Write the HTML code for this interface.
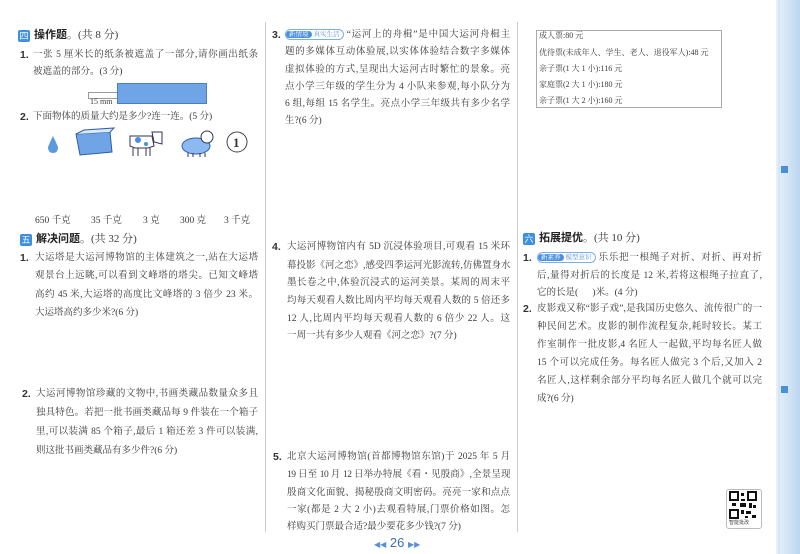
<!DOCTYPE html>
<html><head><meta charset="utf-8">
<style>
body{margin:0;width:800px;height:554px;overflow:hidden;background:#fff;position:relative;font-family:"Liberation Serif","Noto Serif CJK SC",serif;color:#3a3a3a;}
.l{position:absolute;font-size:9.5px;line-height:14px;white-space:nowrap;}
.j{text-align:justify;text-align-last:justify;white-space:normal;height:14px;overflow:visible;}
.n{position:absolute;font-size:10.5px;font-weight:bold;line-height:14px;font-family:"Liberation Sans",sans-serif;color:#333;}
.h{position:absolute;font-size:11px;line-height:14px;white-space:nowrap;}
.h b{font-family:"Liberation Sans","Noto Sans CJK SC",sans-serif;color:#222;}
.ic{display:inline-block;width:12px;height:12px;background:#3d8fe0;color:#fff;font-size:9px;line-height:12px;text-align:center;border-radius:2px;margin-right:4px;vertical-align:-1px;font-family:"Noto Sans CJK SC",sans-serif;}
.vl{position:absolute;top:22px;bottom:22px;width:1px;background:#ccc;}
.tag{display:inline-block;border:1px solid #7aaee8;border-radius:7px;font-size:6.5px;line-height:9px;padding:0 3px 0 0;color:#5a8fd8;vertical-align:1px;}
.tag i{font-style:normal;background:#4a8fe0;color:#fff;border-radius:7px;padding:0 3px;margin-right:2px;}
.t{position:absolute;font-size:8px;line-height:12px;white-space:nowrap;left:539px;}
.s{letter-spacing:-0.5px;}
</style></head><body>
<div class="vl" style="left:265px"></div>
<div class="vl" style="left:517px"></div>
<div style="position:absolute;left:776px;top:0;width:24px;height:554px;background:linear-gradient(90deg,#e6f0fa,#cfe2f5 60%,#bcd6ef)"></div>
<div style="position:absolute;left:778px;top:0;width:2px;height:554px;background:#d6e6f5"></div>
<div style="position:absolute;left:781px;top:166px;width:7px;height:7px;background:#4a8fd8"></div>
<div style="position:absolute;left:781px;top:386px;width:7px;height:7px;background:#4a8fd8"></div>

<!-- Left column -->
<div class="h" style="left:18px;top:28px"><span class="ic">四</span><b>操作题</b>。(共 8 分)</div>
<div class="n" style="left:20px;top:48px">1.</div>
<div class="l j" style="left:33px;top:48px;width:225px">一张 5 厘米长的纸条被遮盖了一部分,请你画出纸条</div>
<div class="l" style="left:33px;top:65px">被遮盖的部分。(3 分)</div>
<div style="position:absolute;left:88px;top:92px;width:29px;height:5px;border:1px solid #999;background:#fff"></div>
<div style="position:absolute;left:90px;top:97px;font-size:8px;font-family:'Liberation Serif',serif">15 mm</div>
<div style="position:absolute;left:117px;top:83px;width:88px;height:19px;background:#6fa4e6;border:1px solid #4a7fc6"></div>
<div class="n" style="left:20px;top:110px">2.</div>
<div class="l" style="left:33px;top:110px">下面物体的质量大约是多少?连一连。(5 分)</div>
<svg style="position:absolute;left:40px;top:126px" width="215" height="36">
<path d="M13 10 Q10 16 8 21 Q8 27 13 27 Q18 27 18 21 Q16 16 13 10Z" fill="#5b9ae0"/>
<path d="M36 8 L70 6 L72 26 L40 29Z" fill="#6fa4e6" stroke="#2a5fa8"/>
<path d="M36 8 L44 4 L74 2 L70 6" fill="#dde9f8" stroke="#2a5fa8"/>
<path d="M90 10 L112 10 L114 20 L108 22 L95 22 L90 20Z" fill="#fff" stroke="#335"/>
<circle cx="98" cy="14" r="3" fill="#4a8fe0"/><circle cx="106" cy="18" r="2" fill="#4a8fe0"/>
<path d="M112 6 L122 6 L122 18 L114 16Z" fill="#fff" stroke="#335"/>
<path d="M93 22 L93 30 M98 22 L98 30 M106 22 L106 30 M110 22 L110 30" stroke="#335"/>
<ellipse cx="156" cy="20" rx="14" ry="8" fill="#8cbaf0" stroke="#2a5fa8"/>
<circle cx="167" cy="11" r="6" fill="#fff" stroke="#335"/>
<path d="M148 27 L148 31 M153 27 L153 31 M160 27 L160 31 M165 27 L165 31" stroke="#335"/>
<circle cx="197" cy="16" r="10" fill="#fff" stroke="#444"/>
<text x="193" y="21" font-size="13" font-weight="bold" fill="#333" font-family="Liberation Serif">1</text>
</svg>
<div class="l" style="left:35px;top:214px">650 千克</div>
<div class="l" style="left:91px;top:214px">35 千克</div>
<div class="l" style="left:143px;top:214px">3 克</div>
<div class="l" style="left:180px;top:214px">300 克</div>
<div class="l" style="left:224px;top:214px">3 千克</div>
<div class="h" style="left:20px;top:232px"><span class="ic">五</span><b>解决问题</b>。(共 32 分)</div>
<div class="n" style="left:20px;top:251px">1.</div>
<div class="l j" style="left:35px;top:251px;width:223px">大运塔是大运河博物馆的主体建筑之一,站在大运塔</div>
<div class="l j" style="left:35px;top:269px;width:223px">观景台上远眺,可以看到文峰塔的塔尖。已知文峰塔</div>
<div class="l j" style="left:35px;top:288px;width:223px">高约 45 米,大运塔的高度比文峰塔的 3 倍少 23 米。</div>
<div class="l" style="left:35px;top:306px">大运塔高约多少米?(6 分)</div>
<div class="n" style="left:22px;top:387px">2.</div>
<div class="l j" style="left:36px;top:387px;width:222px">大运河博物馆珍藏的文物中,书画类藏品数量众多且</div>
<div class="l j" style="left:36px;top:406px;width:222px">独具特色。若把一批书画类藏品每 9 件装在一个箱子</div>
<div class="l j" style="left:36px;top:425px;width:222px">里,可以装满 85 个箱子,最后 1 箱还差 3 件可以装满,</div>
<div class="l" style="left:36px;top:444px">则这批书画类藏品有多少件?(6 分)</div>

<!-- Middle column -->
<div class="n" style="left:272px;top:28px">3.</div>
<div class="l j" style="left:285px;top:28px;width:225px"><span class="tag"><i>新情境</i>真实生活</span> “运河上的舟楫”是中国大运河舟楫主</div>
<div class="l j" style="left:285px;top:45px;width:225px">题的多媒体互动体验展,以实体体验结合数字多媒体</div>
<div class="l j" style="left:285px;top:63px;width:225px">虚拟体验的方式,呈现出大运河古时繁忙的景象。亮</div>
<div class="l j" style="left:285px;top:80px;width:225px">点小学三年级的学生分为 4 小队来参观,每小队分为</div>
<div class="l j" style="left:285px;top:97px;width:225px">6 组,每组 15 名学生。亮点小学三年级共有多少名学</div>
<div class="l" style="left:285px;top:114px">生?(6 分)</div>
<div class="n" style="left:272px;top:240px">4.</div>
<div class="l j" style="left:287px;top:240px;width:223px">大运河博物馆内有 5D 沉浸体验项目,可观看 15 米环</div>
<div class="l j s" style="left:287px;top:259px;width:223px">幕投影《河之恋》,感受四季运河光影流转,仿佛置身水</div>
<div class="l j" style="left:287px;top:276px;width:223px">墨长卷之中,体验沉浸式的运河美景。某周的周末平</div>
<div class="l j" style="left:287px;top:294px;width:223px">均每天观看人数比周内平均每天观看人数的 5 倍还多</div>
<div class="l j" style="left:287px;top:312px;width:223px">12 人,比周内平均每天观看人数的 6 倍少 22 人。这</div>
<div class="l" style="left:287px;top:329px">一周一共有多少人观看《河之恋》?(7 分)</div>
<div class="n" style="left:273px;top:450px">5.</div>
<div class="l j" style="left:287px;top:450px;width:223px">北京大运河博物馆(首都博物馆东馆)于 2025 年 5 月</div>
<div class="l j s" style="left:287px;top:468px;width:223px">19 日至 10 月 12 日举办特展《看・见殷商》,全景呈现</div>
<div class="l j" style="left:287px;top:486px;width:223px">殷商文化面貌、揭秘殷商文明密码。亮亮一家和点点</div>
<div class="l j" style="left:287px;top:503px;width:223px">一家(都是 2 大 2 小)去观看特展,门票价格如图。怎</div>
<div class="l" style="left:287px;top:520px">样购买门票最合适?最少要花多少钱?(7 分)</div>
<div style="position:absolute;left:374px;top:535px;font-size:13px;font-family:'Liberation Sans',sans-serif;color:#3a6fc0"><span style="font-size:8px;color:#5a8fd8">◀◀</span> 26 <span style="font-size:8px;color:#5a8fd8">▶▶</span></div>

<!-- Right column -->
<div style="position:absolute;left:536px;top:30px;width:184px;height:76px;border:1px solid #aaa"></div>
<div class="t" style="top:30px">成人票:80 元</div>
<div class="t" style="top:47px">优待票(未成年人、学生、老人、退役军人):48 元</div>
<div class="t" style="top:63px">亲子票(1 大 1 小):116 元</div>
<div class="t" style="top:79px">家庭票(2 大 1 小):180 元</div>
<div class="t" style="top:95px">亲子票(1 大 2 小):160 元</div>
<div class="h" style="left:523px;top:231px"><span class="ic">六</span><b>拓展提优</b>。(共 10 分)</div>
<div class="n" style="left:523px;top:251px">1.</div>
<div class="l j" style="left:537px;top:251px;width:225px"><span class="tag"><i>新素养</i>模型意识</span> 乐乐把一根绳子对折、对折、再对折</div>
<div class="l j" style="left:537px;top:269px;width:225px">后,量得对折后的长度是 12 米,若将这根绳子拉直了,</div>
<div class="l" style="left:537px;top:286px">它的长是(&nbsp;&nbsp;&nbsp;&nbsp;&nbsp;&nbsp;)米。(4 分)</div>
<div class="n" style="left:523px;top:302px">2.</div>
<div class="l j" style="left:537px;top:302px;width:225px">皮影戏又称“影子戏”,是我国历史悠久、流传很广的一</div>
<div class="l j" style="left:537px;top:320px;width:225px">种民间艺术。皮影的制作流程复杂,耗时较长。某工</div>
<div class="l j" style="left:537px;top:338px;width:225px">作室制作一批皮影,4 名匠人一起做,平均每名匠人做</div>
<div class="l j" style="left:537px;top:356px;width:225px">15 个可以完成任务。每名匠人做完 3 个后,又加入 2</div>
<div class="l j" style="left:537px;top:374px;width:225px">名匠人,这样剩余部分平均每名匠人做几个就可以完</div>
<div class="l" style="left:537px;top:392px">成?(6 分)</div>
<div style="position:absolute;left:726px;top:489px;width:34px;height:38px;border:1px solid #bbb;border-radius:3px;background:#fff"></div>
<svg style="position:absolute;left:729px;top:491px" width="28" height="28">
<rect width="28" height="28" fill="#fff"/>
<rect x="1" y="1" width="8" height="8" fill="none" stroke="#111" stroke-width="2"/>
<rect x="19" y="1" width="8" height="8" fill="none" stroke="#111" stroke-width="2"/>
<rect x="1" y="19" width="8" height="8" fill="none" stroke="#111" stroke-width="2"/>
<path d="M12 2h3v3h-3zM12 8h4v2h-4zM3 12h4v3h-4zM11 12h6v4h-6zM20 12h3v5h-3zM24 14h3v3h-3zM12 19h3v4h-3zM17 20h5v3h-5zM23 24h4v3h-4zM16 25h3v2h-3z" fill="#111"/>
</svg>
<div style="position:absolute;left:729px;top:519px;font-size:5px;color:#444;font-family:'Noto Sans CJK SC',sans-serif">智能批改</div>
</body></html>
